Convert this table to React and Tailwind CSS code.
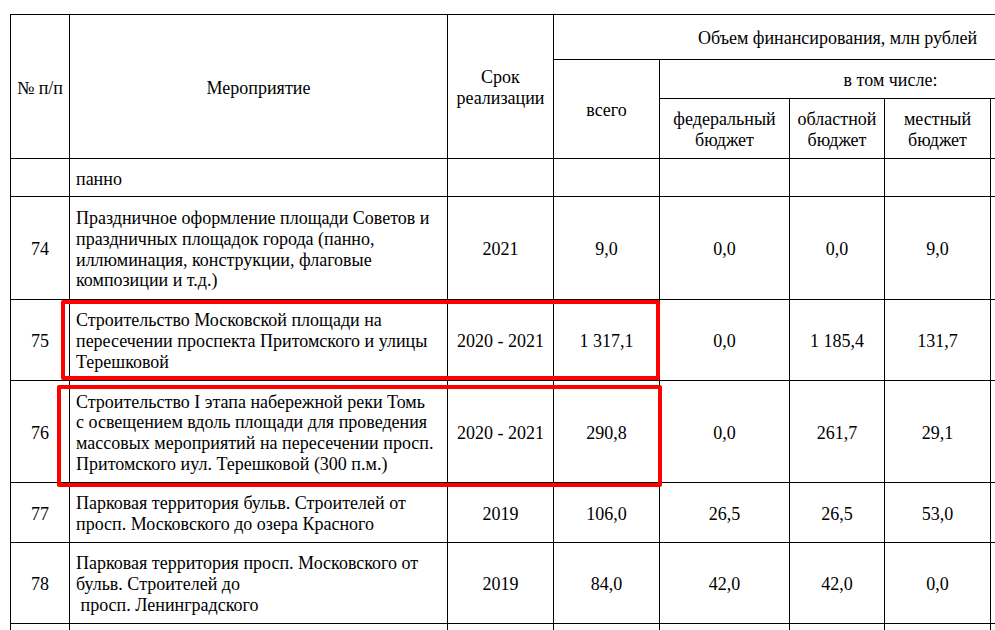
const rows = [
  {
    n: '74',
    text: ['Праздничное оформление площади Советов и', 'праздничных площадок города (панно,', 'иллюминация, конструкции, флаговые', 'композиции и т.д.)'],
    term: '2021', total: '9,0', fed: '0,0', reg: '0,0', loc: '9,0', h: 'h-[103px]',
  },
  {
    n: '75',
    text: ['Строительство Московской площади на', 'пересечении проспекта Притомского и улицы', 'Терешковой'],
    term: '2020 - 2021', total: '1 317,1', fed: '0,0', reg: '1 185,4', loc: '131,7', h: 'h-[81px]',
  },
  {
    n: '76',
    text: ['Строительство I этапа набережной реки Томь', 'с освещением вдоль площади для проведения', 'массовых мероприятий на пересечении просп.', 'Притомского иул. Терешковой (300 п.м.)'],
    term: '2020 - 2021', total: '290,8', fed: '0,0', reg: '261,7', loc: '29,1', h: 'h-[102px]',
  },
  {
    n: '77',
    text: ['Парковая территория бульв. Строителей от', 'просп. Московского до озера Красного'],
    term: '2019', total: '106,0', fed: '26,5', reg: '26,5', loc: '53,0', h: 'h-[60px]',
  },
  {
    n: '78',
    text: ['Парковая территория просп. Московского от', 'бульв. Строителей до', '\u00a0просп. Ленинградского'],
    term: '2019', total: '84,0', fed: '42,0', reg: '42,0', loc: '0,0', h: 'h-[81px]',
  },
];

const cell = 'border border-black align-middle pt-[3px]';

export default function App() {
  return (
    <div className="relative w-[995px] h-[630px] overflow-hidden bg-white pt-[14px] pl-[10px] text-black font-['Liberation_Serif','Times_New_Roman',serif] text-[18px] leading-[20.7px]">
      <table className="table-fixed border-collapse w-[1111px]">
        <colgroup>
          <col className="w-[59px]" />
          <col className="w-[378px]" />
          <col className="w-[106px]" />
          <col className="w-[106px]" />
          <col className="w-[130px]" />
          <col className="w-[95px]" />
          <col className="w-[106px]" />
          <col className="w-[131px]" />
        </colgroup>
        <thead>
          <tr className="h-[45px]">
            <th rowSpan={3} className={`${cell} font-normal text-center`}>№ п/п</th>
            <th rowSpan={3} className={`${cell} font-normal text-center`}>Мероприятие</th>
            <th rowSpan={3} className={`${cell} font-normal text-center`}>Срок<br />реализации</th>
            <th colSpan={5} className={`${cell} font-normal text-center`}>Объем финансирования, млн рублей</th>
          </tr>
          <tr className="h-[39px]">
            <th rowSpan={2} className={`${cell} font-normal text-center`}>всего</th>
            <th colSpan={4} className={`${cell} font-normal text-center`}>в том числе:</th>
          </tr>
          <tr className="h-[60px]">
            <th className={`${cell} font-normal text-center`}>федеральный<br />бюджет</th>
            <th className={`${cell} font-normal text-center`}>областной<br />бюджет</th>
            <th className={`${cell} font-normal text-center`}>местный<br />бюджет</th>
            <th className={cell}></th>
          </tr>
        </thead>
        <tbody>
          <tr className="h-[38px]">
            <td className={cell}></td>
            <td className={`${cell} px-[6px] text-left`}>панно</td>
            <td className={cell}></td>
            <td className={cell}></td>
            <td className={cell}></td>
            <td className={cell}></td>
            <td className={cell}></td>
            <td className={cell}></td>
          </tr>
          {rows.map((r) => (
            <tr key={r.n} className={r.h}>
              <td className={`${cell} text-center`}>{r.n}</td>
              <td className={`${cell} px-[6px] text-left whitespace-nowrap`}>
                {r.text.map((line, i) => (
                  <div key={i}>{line}</div>
                ))}
              </td>
              <td className={`${cell} text-center whitespace-nowrap`}>{r.term}</td>
              <td className={`${cell} text-center whitespace-nowrap`}>{r.total}</td>
              <td className={`${cell} text-center`}>{r.fed}</td>
              <td className={`${cell} text-center`}>{r.reg}</td>
              <td className={`${cell} text-center`}>{r.loc}</td>
              <td className={cell}></td>
            </tr>
          ))}
          <tr className="h-[60px]">
            <td className={cell}></td>
            <td className={cell}></td>
            <td className={cell}></td>
            <td className={cell}></td>
            <td className={cell}></td>
            <td className={cell}></td>
            <td className={cell}></td>
            <td className={cell}></td>
          </tr>
        </tbody>
      </table>

      {/* red highlight frames */}
      <div className="absolute left-[61px] top-[300px] w-[599px] h-[80px] border-[4px] border-[#ff0000] rounded-[2px]" />
      <div className="absolute left-[57px] top-[385px] w-[605px] h-[102px] border-[4px] border-[#ff0000] rounded-[2px]" />
    </div>
  );
}
